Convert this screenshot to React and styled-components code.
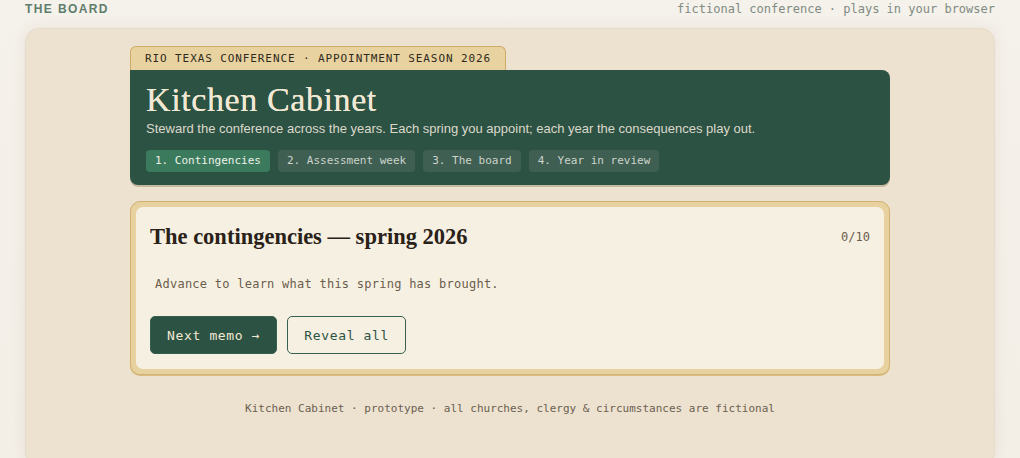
import styled, { createGlobalStyle } from 'styled-components'

const mono = `"DejaVu Sans Mono", "Liberation Mono", monospace`
const serif = `"Liberation Serif", "DejaVu Serif", serif`
const sans = `"Liberation Sans", Arial, sans-serif`

const GlobalStyle = createGlobalStyle`
  html, body {
    margin: 0;
    padding: 0;
    background: #f4f0e9;
  }
  body {
    font-family: ${sans};
  }
`

const steps = ['1. Contingencies', '2. Assessment week', '3. The board', '4. Year in review']

const App = () => {
  return (
    <Page>
      <GlobalStyle />
      <TopBar>
        <Brand>THE BOARD</Brand>
        <Tagline>fictional conference · plays in your browser</Tagline>
      </TopBar>
      <Panel>
        <Column>
          <Header>
            <Tab>RIO TEXAS CONFERENCE · APPOINTMENT SEASON 2026</Tab>
            <HeaderBody>
              <Title>Kitchen Cabinet</Title>
              <Subtitle>
                Steward the conference across the years. Each spring you appoint; each year the
                consequences play out.
              </Subtitle>
              <Steps>
                {steps.map((s, i) => (
                  <Step key={s} active={i === 0}>
                    {s}
                  </Step>
                ))}
              </Steps>
            </HeaderBody>
          </Header>

          <Card>
            <CardInner>
              <CardHead>
                <CardTitle>The contingencies — spring 2026</CardTitle>
                <Counter>0/10</Counter>
              </CardHead>
              <Hint>Advance to learn what this spring has brought.</Hint>
              <Actions>
                <Button primary>Next memo →</Button>
                <Button>Reveal all</Button>
              </Actions>
            </CardInner>
          </Card>

          <Footer>
            Kitchen Cabinet · prototype · all churches, clergy &amp; circumstances are fictional
          </Footer>
        </Column>
      </Panel>
    </Page>
  )
}

export default App

const Page = styled.div`
  padding: 0 25px;
  min-height: 458px;
  box-sizing: border-box;
  background: linear-gradient(180deg, #f5f1eb 0%, #f3eee6 100%);
`

const TopBar = styled.div`
  height: 28px;
  display: flex;
  align-items: flex-start;
  justify-content: space-between;
  padding-top: 1px;
  box-sizing: border-box;
`

const Brand = styled.div`
  font-family: ${sans};
  font-weight: 700;
  font-size: 12px;
  letter-spacing: 1.4px;
  color: #5f7d6c;
  line-height: 16px;
`

const Tagline = styled.div`
  font-family: ${mono};
  font-size: 12px;
  color: #7f8b82;
  line-height: 16px;
`

const Panel = styled.div`
  background: #ede2d0;
  border: 1px solid #e6dccb;
  border-radius: 14px;
  box-shadow: 0 0 12px rgba(200, 185, 160, 0.25);
  padding: 17px 0 50px;
  display: flex;
  justify-content: center;
`

const Column = styled.div`
  width: 760px;
  display: flex;
  flex-direction: column;
`

const Header = styled.div`
  display: flex;
  flex-direction: column;
  align-items: flex-start;
`

const Tab = styled.div`
  font-family: ${mono};
  font-size: 11px;
  letter-spacing: 0.9px;
  color: #2e2a22;
  background: #e8d29f;
  border: 1px solid #ceab62;
  border-bottom: none;
  border-radius: 6px 6px 0 0;
  padding: 5px 14px 5px 14px;
  line-height: 13px;
`

const HeaderBody = styled.div`
  align-self: stretch;
  background: #2c5243;
  border-radius: 0 8px 8px 8px;
  box-shadow: 0 2px 0 #c6b9a1;
  padding: 12px 16px 13px;
`

const Title = styled.h1`
  margin: 0;
  font-family: ${serif};
  font-weight: 400;
  font-size: 34px;
  letter-spacing: 0.6px;
  line-height: 36px;
  color: #f1e8d3;
  text-shadow: 0 0 0.4px #f1e8d3;
`

const Subtitle = styled.p`
  margin: 3px 0 0;
  font-family: ${sans};
  font-size: 13px;
  line-height: 16px;
  color: #dcd8cb;
`

const Steps = styled.div`
  display: flex;
  gap: 8px;
  margin-top: 13px;
`

const Step = styled.div`
  font-family: ${mono};
  font-size: 11px;
  line-height: 22px;
  padding: 0 9px;
  border-radius: 4px;
  color: ${p => (p.active ? '#eef1e8' : '#cdd3cb')};
  background: ${p => (p.active ? '#3b7a5d' : '#3e5f52')};
`

const Card = styled.div`
  margin-top: 16px;
  background: #e7d19e;
  border: 1px solid #d2b272;
  border-radius: 10px;
  padding: 5px;
  box-shadow: 0 1px 0 #d8bc80;
`

const CardInner = styled.div`
  background: #f6f0e2;
  border-radius: 7px;
  padding: 17px 14px 15px;
`

const CardHead = styled.div`
  display: flex;
  align-items: center;
  justify-content: space-between;
`

const CardTitle = styled.h2`
  margin: 0;
  font-family: ${serif};
  font-weight: 700;
  font-size: 22.5px;
  line-height: 25px;
  color: #2a2118;
`

const Counter = styled.div`
  font-family: ${mono};
  font-size: 12px;
  color: #6c5d4c;
`

const Hint = styled.p`
  margin: 27px 0 0 5px;
  font-family: ${mono};
  font-size: 12px;
  letter-spacing: 0.25px;
  line-height: 16px;
  color: #6c5d4c;
`

const Actions = styled.div`
  display: flex;
  gap: 10px;
  margin-top: 24px;
`

const Button = styled.button`
  font-family: ${mono};
  font-size: 13px;
  letter-spacing: 0.65px;
  height: 38px;
  padding: 0 16px;
  border-radius: 5px;
  cursor: pointer;
  border: 1.5px solid #36604f;
  color: ${p => (p.primary ? '#f1e8d3' : '#2c5243')};
  background: ${p => (p.primary ? '#2c5243' : 'transparent')};
`

const Footer = styled.div`
  margin-top: 27px;
  text-align: center;
  font-family: ${mono};
  font-size: 11px;
  color: #6b6050;
`
